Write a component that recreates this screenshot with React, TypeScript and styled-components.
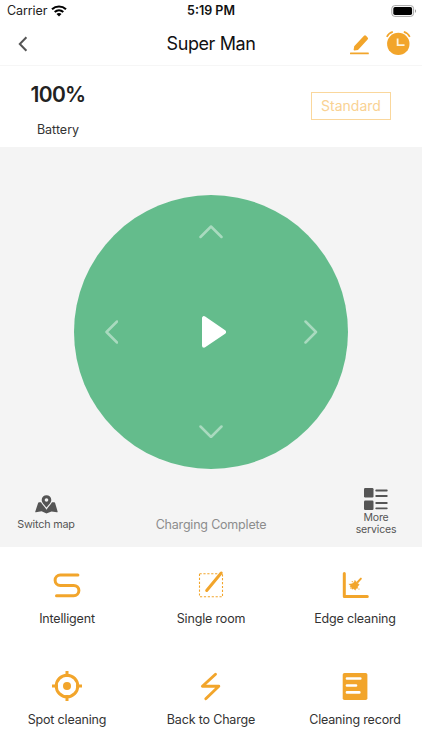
import type { ReactNode } from "react";
import styled, { createGlobalStyle } from "styled-components";

const ORANGE = "#f2a52b";
const PANEL = "#f4f4f4";

const GlobalStyle = createGlobalStyle`
  * {
    box-sizing: border-box;
  }
  body {
    margin: 0;
    background: #fff;
    font-family: Inter, "Liberation Sans", sans-serif;
  }
  svg {
    display: block;
    flex: none;
  }
`;

const Screen = styled.div`
  width: 422px;
  height: 750px;
  display: flex;
  flex-direction: column;
  overflow: hidden;
  background: #fff;
`;

const StatusBar = styled.div`
  height: 22px;
  flex: none;
  display: grid;
  grid-template-columns: 1fr auto 1fr;
  align-items: center;
  padding: 0 5px;
`;

const StatusSide = styled.div<{ $end?: boolean }>`
  display: flex;
  align-items: center;
  gap: 4px;
  padding-left: 2px;
  justify-content: ${(p) => (p.$end ? "flex-end" : "flex-start")};
`;

const Text = styled.span<{
  $size: number;
  $color?: string;
  $weight?: number;
  $spacing?: number;
  $line?: number;
}>`
  font-size: ${(p) => p.$size}px;
  color: ${(p) => p.$color || "#333"};
  font-weight: ${(p) => p.$weight || 400};
  letter-spacing: ${(p) => p.$spacing || 0}px;
  line-height: ${(p) => p.$line || 16}px;
  text-align: center;
  white-space: nowrap;
`;

const Header = styled.header`
  height: 44px;
  flex: none;
  display: grid;
  grid-template-columns: 1fr auto 1fr;
  align-items: center;
  padding: 0 11px;
  border-bottom: 1px solid #f6f6f6;
`;

const BackButton = styled.button`
  justify-self: start;
  padding: 0 0 0 6px;
  border: 0;
  background: none;
`;

const HeaderActions = styled.div`
  display: flex;
  justify-content: flex-end;
  align-items: flex-end;
  gap: 16px;
  padding-bottom: 1px;
`;

const Summary = styled.section`
  height: 81px;
  flex: none;
  display: flex;
  justify-content: space-between;
  align-items: flex-start;
  padding: 16px 31px 0;
`;

const BatteryInfo = styled.div`
  width: 54px;
  display: flex;
  flex-direction: column;
  align-items: center;
  gap: 15px;
  padding-top: 1px;
`;

const ModeButton = styled.button`
  width: 80px;
  height: 28px;
  margin-top: 10px;
  padding: 0;
  border: 1.5px solid #fad79c;
  background: #fff;
  font-family: inherit;
`;

const ControlPanel = styled.main`
  height: 400px;
  flex: none;
  display: flex;
  flex-direction: column;
  align-items: center;
  padding-top: 47.5px;
  background: ${PANEL};
`;

const Dial = styled.div`
  width: 274px;
  height: 274px;
  flex: none;
  display: grid;
  grid-template-columns: 1fr auto 1fr;
  grid-template-rows: 1fr auto 1fr;
  align-items: center;
  justify-items: center;
  padding: 30.5px;
  border-radius: 50%;
  background: #64bc8c;
`;

const DialButton = styled.button<{ $area: string; $align?: string; $justify?: string }>`
  grid-area: ${(p) => p.$area};
  align-self: ${(p) => p.$align || "center"};
  justify-self: ${(p) => p.$justify || "center"};
  padding: 0;
  border: 0;
  background: none;
`;

const PanelFooter = styled.div`
  width: 100%;
  flex: 1;
  display: grid;
  grid-template-columns: 92px 1fr 92px;
`;

const FooterItem = styled.div<{ $top: number; $gap?: number }>`
  display: flex;
  flex-direction: column;
  align-items: center;
  gap: ${(p) => p.$gap || 0}px;
  padding-top: ${(p) => p.$top}px;
`;

const Features = styled.section`
  flex: 1;
  min-height: 0;
  display: grid;
  grid-template-columns: repeat(3, 144px);
  grid-auto-rows: 101px;
  justify-content: center;
  padding-top: 22px;
`;

const Feature = styled.div`
  display: flex;
  flex-direction: column;
  align-items: center;
  gap: 10px;
`;

const WifiIcon = () => (
  <svg width="16" height="12" viewBox="0 0 16 12" fill="none" stroke="#000" strokeWidth="2.1">
    <path d="M1 4.2C5 .5 11 .5 15 4.2" />
    <path d="M3.7 7C6.2 4.8 9.8 4.8 12.3 7" />
    <path d="M8 11.4 5.5 8.9C6.9 7.7 9.1 7.7 10.5 8.9Z" fill="#000" stroke="none" />
  </svg>
);

const BatteryIcon = () => (
  <svg width="26" height="12" viewBox="0 0 26 12">
    <rect x=".8" y=".6" width="21.8" height="10.8" rx="3" fill="none" stroke="#a5a5a5" />
    <rect x="2.3" y="2.1" width="18.8" height="7.8" rx="1.7" fill="#000" />
    <path d="M24 4.2C25.4 4.7 25.4 7.3 24 7.8Z" fill="#999" />
  </svg>
);

const BackIcon = () => (
  <svg width="12" height="16" viewBox="0 0 12 16" fill="none" stroke="#555" strokeWidth="2">
    <path d="M9.4 1.2 2.8 8l6.6 6.8" />
  </svg>
);

const PencilIcon = () => (
  <svg width="20" height="22" viewBox="0 0 20 22" fill={ORANGE}>
    <path d="M14 1.8a1.4 1.4 0 0 1 2 0l1.6 1.6a1.4 1.4 0 0 1 0 2L8 15.9 4.3 16.6 3.6 15.9 4.2 12.2Z" />
    <rect x="0" y="18.6" width="18.8" height="1.7" rx=".5" />
  </svg>
);

const AlarmIcon = () => (
  <svg width="25" height="25" viewBox="0 0 25 25" fill="none">
    <circle cx="12.3" cy="12.9" r="11.2" fill={ORANGE} />
    <path
      d="M.8 5.8C2 3.4 4 1.6 6.8.9M23.8 5.8C22.6 3.4 20.6 1.6 17.8.9"
      stroke={ORANGE}
      strokeWidth="1.6"
    />
    <path d="M11.6 7.4v6.7h6.9" stroke="#fff4dc" strokeWidth="1.8" />
  </svg>
);

const arrows = {
  up: "M1.5 12 12 1.5 22.5 12",
  down: "M1.5 1.5 12 12 22.5 1.5",
  left: "M12 1.5 1.5 12 12 22.5",
  right: "M1.5 1.5 12 12 1.5 22.5",
};

function Arrow({ direction }: { direction: keyof typeof arrows }) {
  const vertical = direction === "up" || direction === "down";
  const width = vertical ? 24 : 13.5;
  const height = vertical ? 13.5 : 24;
  return (
    <svg
      width={width}
      height={height}
      viewBox={`0 0 ${width} ${height}`}
      fill="none"
      stroke="#a9dabf"
      strokeWidth="2.5"
      strokeLinecap="round"
      strokeLinejoin="round">
      <path d={arrows[direction]} />
    </svg>
  );
}

const PlayIcon = () => (
  <svg width="30" height="34" viewBox="0 0 30 34">
    <path
      d="M8 3.1v27.6L28 17Z"
      fill="#fff"
      stroke="#fff"
      strokeWidth="4"
      strokeLinejoin="round"
    />
  </svg>
);

const MapIcon = () => (
  <svg width="23" height="19" viewBox="0 0 23 19" fill="#555">
    <path d="M4 7.3h15.2q.7 0 .9.7l2.5 8.4q.2.9-.7.8l-5.4-.7-4.5 1.8q-.5.2-1 0L6.6 16.2.9 17.3q-.9.1-.6-.8L3.1 8Q3.4 7.3 4 7.3Z" />
    <path
      d="M11.5.2a4.8 4.8 0 0 1 4.8 4.8c0 2.9-3 5-4.8 7.6C9.7 10 6.7 7.900 6.7 5A4.8 4.8 0 0 1 11.5.2Z"
      stroke={PANEL}
      strokeWidth="2.4"
      paintOrder="stroke"
    />
    <circle cx="11.5" cy="5" r="1.8" fill={PANEL} />
  </svg>
);

const ServicesIcon = () => (
  <svg width="24" height="22" viewBox="0 0 24 22" fill="#555">
    <rect width="9.5" height="9.5" rx="1.2" />
    <rect y="12.5" width="9.5" height="9.5" rx="1.2" />
    <path
      d="M12.2 2.5h10.6M12.2 8h10.6M12.2 15h10.6M12.2 20.3h10.6"
      stroke="#555"
      strokeWidth="1.8"
      strokeLinecap="round"
    />
  </svg>
);

// All feature icons share a 32x32 box
const FeatureIcon = ({ children }: { children: ReactNode }) => (
  <svg
    width="32"
    height="32"
    viewBox="0 0 32 32"
    fill="none"
    stroke={ORANGE}
    strokeWidth="3"
    strokeLinecap="round"
    strokeLinejoin="round">
    {children}
  </svg>
);

const features = [
  {
    name: "Intelligent",
    icon: <path d="M26.9 6H9.3a5.2 5.2 0 0 0 0 10.4h13.4a5.2 5.2 0 0 1 0 10.4H5.5" />,
  },
  {
    name: "Single room",
    icon: (
      <>
        <rect
          x="4.5"
          y="4.8"
          width="23"
          height="23"
          strokeWidth="1.1"
          strokeDasharray="2.2 1.7"
          strokeLinecap="butt"
        />
        <path d="M26.2 4 11.7 21.5" />
      </>
    ),
  },
  {
    name: "Edge cleaning",
    icon: (
      <>
        <path d="M5.3 4.4v23.2h23" />
        <path d="M21.9 9.6 18.8 13" strokeWidth="1.9" />
        <path
          d="M16 11.400l4.300 4.400-1.500 1.500-.2 2-1.600.2-.6 1.700-1.800-1.400-1.600.4-.2-1.800-1.700-.4.500-1.500-1.800-1.300 3-.5 1.800-.9Z"
          fill={ORANGE}
          strokeWidth=".4"
        />
        <path d="M13.200 12.600h.1M19.900 20h.1M11.900 19.200h.1" strokeWidth="1.200" />
      </>
    ),
  },
  {
    name: "Spot cleaning",
    icon: (
      <>
        <circle cx="16" cy="16" r="10.8" />
        <circle cx="16" cy="16" r="4" fill={ORANGE} stroke="none" />
        <path d="M16 1v6M16 25v6M1 16h6M25 16h6" strokeLinecap="butt" />
      </>
    ),
  },
  {
    name: "Back to Charge",
    icon: <path d="M20.5 4.2 7.4 16.3h16.4L10.8 28.8" strokeWidth="2.9" />,
  },
  {
    name: "Cleaning record",
    icon: (
      <>
        <rect x="3.7" y="3" width="24.7" height="27" rx="1.8" fill={ORANGE} stroke="none" />
        <path d="M8 8.5h13.3M8 15.5h9M8 22.4h12.3" stroke="#fff" strokeWidth="2.7" />
      </>
    ),
  },
];

function App() {
  return (
    <Screen>
      <GlobalStyle />
      <StatusBar>
        <StatusSide>
          <Text $size={12.5} $color="#222" $spacing={-0.1}>Carrier</Text>
          <WifiIcon />
        </StatusSide>
        <Text $size={12.5} $weight={600} $color="#111">5:19 PM</Text>
        <StatusSide $end>
          <BatteryIcon />
        </StatusSide>
      </StatusBar>
      <Header>
        <BackButton>
          <BackIcon />
        </BackButton>
        <Text $size={18} $color="#111" $line={22} $spacing={-0.4}>Super Man</Text>
        <HeaderActions>
          <PencilIcon />
          <AlarmIcon />
        </HeaderActions>
      </Header>
      <Summary>
        <BatteryInfo>
          <Text $size={21} $weight={600} $color="#222" $line={24} $spacing={-0.7}>100%</Text>
          <Text $size={12.5}>Battery</Text>
        </BatteryInfo>
        <ModeButton>
          <Text $size={14} $color="#f9d293">Standard</Text>
        </ModeButton>
      </Summary>
      <ControlPanel>
        <Dial>
          <DialButton $area="1 / 2" $align="start">
            <Arrow direction="up" />
          </DialButton>
          <DialButton $area="2 / 1" $justify="start">
            <Arrow direction="left" />
          </DialButton>
          <DialButton $area="2 / 2">
            <PlayIcon />
          </DialButton>
          <DialButton $area="2 / 3" $justify="end">
            <Arrow direction="right" />
          </DialButton>
          <DialButton $area="3 / 2" $align="end">
            <Arrow direction="down" />
          </DialButton>
        </Dial>
        <PanelFooter>
          <FooterItem $top={26.5} $gap={4}>
            <MapIcon />
            <Text $size={10.8} $color="#555" $line={14} $spacing={-0.2}>Switch map</Text>
          </FooterItem>
          <FooterItem $top={48.5}>
            <Text $size={12.5} $color="#8c8c8c" $spacing={-0.2}>Charging Complete</Text>
          </FooterItem>
          <FooterItem $top={19.5} $gap={2}>
            <ServicesIcon />
            <Text $size={10.5} $color="#555" $line={12} $spacing={-0.15}>
              More
              <br />
              services
            </Text>
          </FooterItem>
        </PanelFooter>
      </ControlPanel>
      <Features>
        {features.map((item) => (
          <Feature key={item.name}>
            <FeatureIcon>{item.icon}</FeatureIcon>
            <Text $size={12.5} $spacing={-0.17}>{item.name}</Text>
          </Feature>
        ))}
      </Features>
    </Screen>
  );
}

export default App;
